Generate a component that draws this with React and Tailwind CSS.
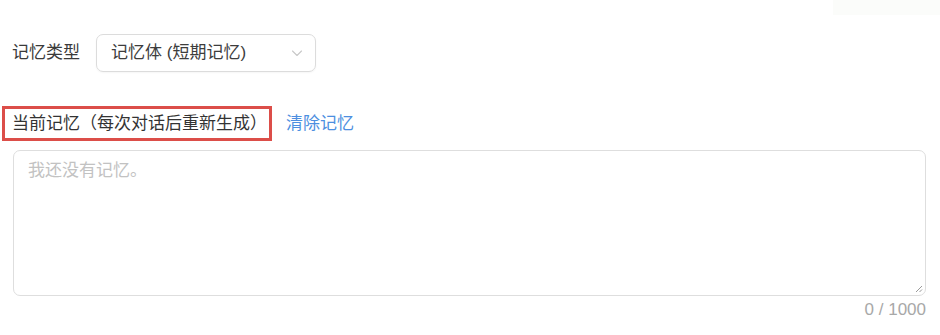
import React from "react";

export default function App() {
  return (
    <div
      className="relative w-[940px] h-[335px] overflow-hidden bg-white text-[#3a3a3a]"
      style={{ fontFamily: '"Liberation Sans", "Noto Sans CJK SC", sans-serif' }}
    >
      <div className="absolute right-0 top-0 h-[15px] w-[107px] bg-[#fbfcfa]" />
      <div className="flex items-center pl-[12px] pt-[34px]">
        <span className="text-[17px] leading-[24px]">记忆类型</span>
        <div className="ml-[16px] flex h-[38px] w-[220px] items-center justify-between rounded-[7px] border border-[#dcdcdc] pl-[14px] pr-[12px] shadow-[0_1px_2px_rgba(0,0,0,0.04)]">
          <span className="text-[17px] leading-[24px] text-[#3d3d3d]">记忆体 (短期记忆)</span>
          <svg width="12" height="12" viewBox="0 0 12 12" fill="none">
            <path d="M1.5 4l4.5 4.5L10.5 4" stroke="#c8c8c8" strokeWidth="1.1" strokeLinecap="round" strokeLinejoin="round" />
          </svg>
        </div>
      </div>
      <div className="mt-[34px] flex items-center pl-[2px]">
        <div className="flex h-[35px] items-center border-[3px] border-[#dc4e49] pl-[7px] pr-[2px]">
          <span className="text-[17px] leading-[24px] text-[#333]">当前记忆（每次对话后重新生成）</span>
        </div>
        <span className="ml-[14px] text-[17px] leading-[24px] text-[#4d8fe0]">清除记忆</span>
      </div>
      <div className="relative ml-[13px] mt-[9px] h-[146px] w-[913px] rounded-[7px] border border-[#dedede] px-[14px] pt-[7px]">
        <span className="text-[17px] leading-[26px] text-[#c2c2c2]">我还没有记忆。</span>
        <svg className="absolute bottom-[2px] right-[2px]" width="9" height="9" viewBox="0 0 9 9">
          <path d="M8 2L2 8M8 5.5L5.5 8" stroke="#9a9a9a" strokeWidth="1" />
        </svg>
      </div>
      <div className="w-[926px] text-right text-[17px] leading-[24px] text-[#a8a8a8] mt-[2px]">0 / 1000</div>
    </div>
  );
}
